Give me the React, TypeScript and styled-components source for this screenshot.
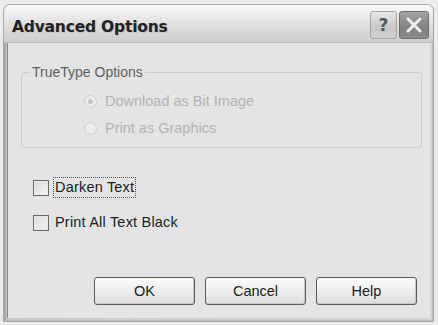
import React from "react";
import styled, { createGlobalStyle } from "styled-components";

const GlobalStyle = createGlobalStyle`
  html, body { margin: 0; padding: 0; background: #ececec; }
  body { font-family: "Liberation Sans", Arial, sans-serif; }
`;

const Frame = styled.div`
  box-sizing: border-box;
  width: 431px;
  height: 318px;
  margin: 4px 0 0 3px;
  border: 1px solid #a8a8a8;
  border-radius: 7px 7px 0 0;
  background: linear-gradient(to right, #9a9a9a 0, #c9c9c9 3px, #d4d4d4 100%);
  display: flex;
  flex-direction: column;
  padding: 0 3px 3px 3px;
  box-shadow: inset -1px -1px 0 #bdbdbd;
`;

const TitleBar = styled.div`
  height: 37px;
  margin: 0 -3px;
  padding: 0 4px 0 8px;
  display: flex;
  align-items: center;
  border-radius: 6px 6px 0 0;
  background: linear-gradient(to bottom, #fafafa 0%, #e8e8e8 35%, #d6d6d6 75%, #cfcfcf 100%);
  border-bottom: 1px solid #bcbcbc;
`;

const Title = styled.div`
  flex: 1;
  font-family: "DejaVu Sans", "Liberation Sans", sans-serif;
  font-weight: bold;
  font-size: 15.5px;
  letter-spacing: -0.2px;
  color: #222;
  padding-top: 6px;
  text-shadow: 1px 1px 0 #c4c4c4;
`;

const CaptionButton = styled.div<{ $dark?: boolean; $w: number }>`
  box-sizing: border-box;
  width: ${(p) => p.$w}px;
  height: 28px;
  margin-left: 2px;
  margin-top: 2px;
  border-radius: 3px;
  border: 1px solid ${(p) => (p.$dark ? "#6e6e6e" : "#a6a6a6")};
  background: ${(p) =>
    p.$dark
      ? "linear-gradient(to bottom, #a4a4a4, #808080 60%, #8a8a8a)"
      : "linear-gradient(to bottom, #e6e6e6, #c8c8c8 60%, #cfcfcf)"};
  display: flex;
  align-items: center;
  justify-content: center;
  color: #555;
  font-family: "DejaVu Sans", sans-serif;
  font-weight: bold;
  font-size: 17px;
`;

const Client = styled.div`
  flex: 1;
  background: #e4e4e4;
  display: flex;
  flex-direction: column;
  padding: 21px 8px 13px 13px;
  border-left: 1px solid #8a8a8a;
`;

const Group = styled.fieldset`
  margin: 0;
  padding: 13px 0 0 63px;
  height: 84px;
  box-sizing: border-box;
  border: 1px solid #cdcdcd;
  border-radius: 3px;
  display: flex;
  flex-direction: column;
  gap: 11px;
`;

const Legend = styled.legend`
  margin-left: -55px;
  padding: 0 2px;
  font-size: 14px;
  color: #5e5e5e;
  line-height: 16px;
`;

const RadioRow = styled.div`
  display: flex;
  align-items: center;
  gap: 8px;
  font-size: 14.5px;
  color: #b4b4b4;
  height: 16px;
`;

const RadioDot = styled.span<{ $checked?: boolean }>`
  box-sizing: border-box;
  width: 13px;
  height: 13px;
  margin-left: -1px;
  border-radius: 50%;
  border: 1px solid #cfcfcf;
  background: #ebebeb;
  display: flex;
  align-items: center;
  justify-content: center;
  &::after {
    content: "";
    display: ${(p) => (p.$checked ? "block" : "none")};
    width: 5px;
    height: 5px;
    border-radius: 50%;
    background: #c4c4c4;
  }
`;

const Checks = styled.div`
  display: flex;
  flex-direction: column;
  gap: 18px;
  margin: 31px 0 0 12px;
`;

const CheckRow = styled.div`
  display: flex;
  align-items: center;
  gap: 4px;
  height: 17px;
`;

const Box = styled.span`
  box-sizing: border-box;
  width: 16px;
  height: 16px;
  border: 1px solid #6a6a6a;
  background: linear-gradient(135deg, #dcdcdc, #f4f4f4);
  box-shadow: inset 0 0 0 1px #e9e9e9;
`;

const CheckLabel = styled.span<{ $focus?: boolean }>`
  font-size: 14.5px;
  letter-spacing: 0.2px;
  color: #1c1c1c;
  padding: 1px 1px;
  border: 1px dotted ${(p) => (p.$focus ? "#555" : "transparent")};
  line-height: 17px;
`;

const Buttons = styled.div`
  margin-top: auto;
  display: flex;
  justify-content: flex-end;
  gap: 10px;
  padding-right: 5px;
`;

const Button = styled.div`
  box-sizing: border-box;
  width: 101px;
  height: 28px;
  border: 1px solid #5a5a5a;
  border-radius: 3px;
  background: linear-gradient(to bottom, #fbfbfb, #ececec 60%, #dcdcdc);
  box-shadow: inset -1px -1px 0 #c8c8c8;
  display: flex;
  align-items: center;
  justify-content: center;
  font-size: 14.5px;
  color: #1a1a1a;
`;

const CloseIcon = () => (
  <svg width="18" height="18" viewBox="0 0 18 18">
    <path d="M3 3 L15 15 M15 3 L3 15" stroke="#f0f0f0" strokeWidth="3" strokeLinecap="round" />
  </svg>
);

export default function App() {
  return (
    <>
      <GlobalStyle />
      <Frame>
        <TitleBar>
          <Title>Advanced Options</Title>
          <CaptionButton $w={27}>?</CaptionButton>
          <CaptionButton $w={30} $dark>
            <CloseIcon />
          </CaptionButton>
        </TitleBar>
        <Client>
          <Group>
            <Legend>TrueType Options</Legend>
            <RadioRow>
              <RadioDot $checked />
              Download as Bit Image
            </RadioRow>
            <RadioRow>
              <RadioDot />
              Print as Graphics
            </RadioRow>
          </Group>
          <Checks>
            <CheckRow>
              <Box />
              <CheckLabel $focus>Darken Text</CheckLabel>
            </CheckRow>
            <CheckRow>
              <Box />
              <CheckLabel>Print All Text Black</CheckLabel>
            </CheckRow>
          </Checks>
          <Buttons>
            <Button>OK</Button>
            <Button>Cancel</Button>
            <Button>Help</Button>
          </Buttons>
        </Client>
      </Frame>
    </>
  );
}
